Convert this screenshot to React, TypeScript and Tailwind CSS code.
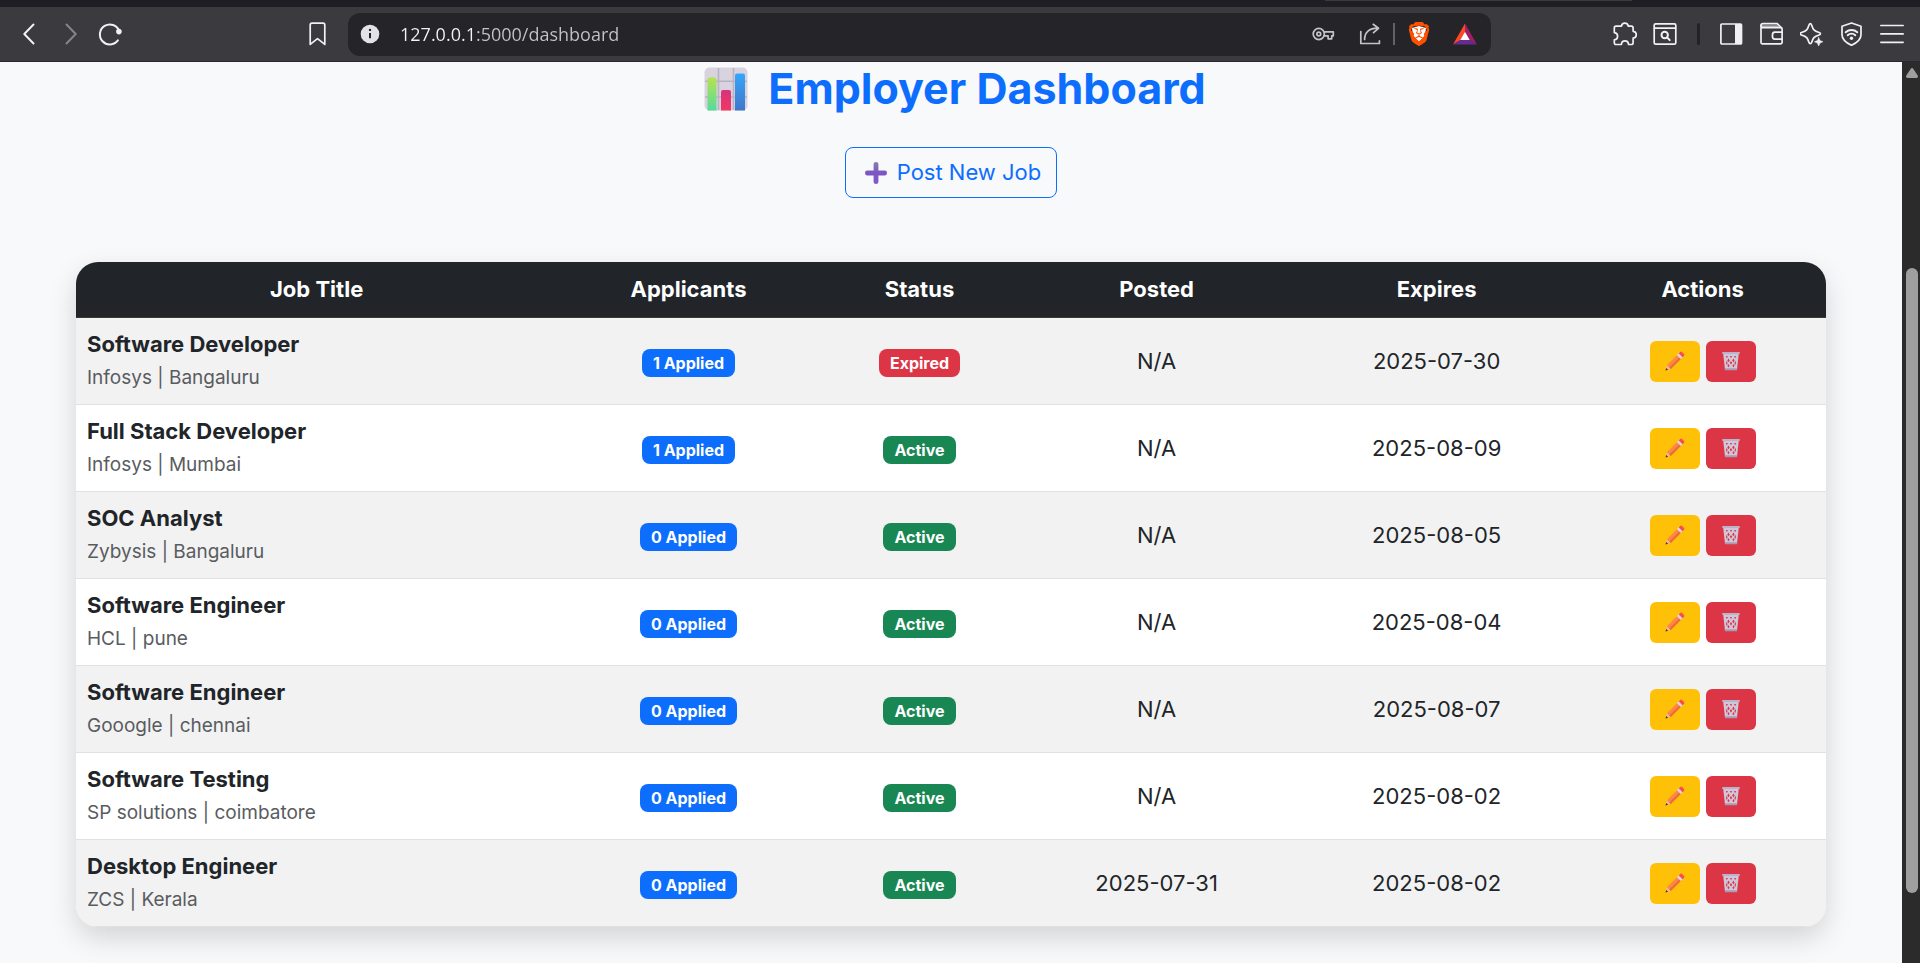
import type { ReactNode } from "react";
import { SiBrave } from "react-icons/si";

type Job = {
  title: string;
  company: string;
  place: string;
  applied: number;
  active: boolean;
  posted: string;
  expires: string;
};

const jobs: Job[] = [
  { title: "Software Developer", company: "Infosys", place: "Bangaluru", applied: 1, active: false, posted: "N/A", expires: "2025-07-30" },
  { title: "Full Stack Developer", company: "Infosys", place: "Mumbai", applied: 1, active: true, posted: "N/A", expires: "2025-08-09" },
  { title: "SOC Analyst", company: "Zybysis", place: "Bangaluru", applied: 0, active: true, posted: "N/A", expires: "2025-08-05" },
  { title: "Software Engineer", company: "HCL", place: "pune", applied: 0, active: true, posted: "N/A", expires: "2025-08-04" },
  { title: "Software Engineer", company: "Gooogle", place: "chennai", applied: 0, active: true, posted: "N/A", expires: "2025-08-07" },
  { title: "Software Testing", company: "SP solutions", place: "coimbatore", applied: 0, active: true, posted: "N/A", expires: "2025-08-02" },
  { title: "Desktop Engineer", company: "ZCS", place: "Kerala", applied: 0, active: true, posted: "2025-07-31", expires: "2025-08-02" },
];

function Tool({ label, className = "", children }: { label: string; className?: string; children: ReactNode }) {
  return (
    <button type="button" aria-label={label} className={`size-6 shrink-0 ${className}`}>
      <svg viewBox="0 0 24 24" className="size-6" fill="none" stroke="currentColor" strokeWidth="1.7" strokeLinecap="round" strokeLinejoin="round" aria-hidden="true">
        {children}
      </svg>
    </button>
  );
}

function AddressBar() {
  return (
    <div className="flex h-[43px] flex-1 items-center gap-[22px] rounded-xl bg-[#252429] pr-3.5 pl-2.5 text-[#c4c4c7]">
      <Tool label="Site information" className="text-[#e3e3e6]">
        <circle cx="12" cy="12" r="9.3" fill="currentColor" stroke="none" />
        <path d="M12 11v5.3" stroke="#252429" strokeWidth="2" strokeLinecap="butt" />
        <circle cx="12" cy="7.9" r="1.2" fill="#252429" stroke="none" />
      </Tool>
      <input
        aria-label="Address"
        defaultValue="127.0.0.1:5000/dashboard"
        className="-ml-1 h-8 min-w-0 flex-1 bg-[linear-gradient(90deg,#f4f4f5_75px,#c4c4c7_75px)] bg-clip-text font-['Open_Sans',sans-serif] text-[18px] text-transparent outline-none"
      />
      <Tool label="Passwords">
        <circle cx="7.8" cy="12" r="5.6" />
        <circle cx="7.8" cy="12" r="1.9" />
        <path d="M12.9 9.800h9.400v4h-1.600v3h-3.600v-3h-4.200" />
      </Tool>
      <Tool label="Share">
        <path d="M3.800 9.500v12h18.600v-2.600" />
        <path d="M7.600 17.500c0-7 4.800-11.300 12.800-11.300M16.200 2.300l5.300 4-5 4.300" />
      </Tool>
      <span className="-mx-2.5 h-[22px] w-0.5 bg-[#626166]" />
      <button type="button" aria-label="Brave Shields" className="grid size-6 place-items-center">
        <svg viewBox="0 0 24 24" className="col-start-1 row-start-1 size-6" aria-hidden="true">
          <path d="M5 6 12 4l7 2-1 8-6 6-6-6z" fill="#fff" />
        </svg>
        <SiBrave className="col-start-1 row-start-1 size-6 text-[#ff5000]" aria-hidden="true" />
      </button>
      <button type="button" aria-label="Brave Rewards" className="size-6">
        <svg viewBox="0 0 24 24" className="size-6" aria-hidden="true">
          <path d="M12 1.500 0 22.500l7.600-4.600L12 10z" fill="#ff4724" />
          <path d="m12 1.500 12 21-7.600-4.600L12 10z" fill="#9e1f63" />
          <path d="M0 22.500h24l-7.600-4.600H7.600z" fill="#662d91" />
          <path d="m12 9.700 4.700 8.400H7.300z" fill="#fff" />
        </svg>
      </button>
    </div>
  );
}

function BrowserBar() {
  return (
    <header className="font-['Open_Sans',sans-serif]">
      <div className="flex h-[7px] items-start bg-[#1f1e24]">
        <div className="ml-[69%] h-px w-[16%] bg-[#3b3a3f]" />
      </div>
      <nav aria-label="Browser" className="flex h-[55px] items-center border-b border-[#29282d] bg-[#3b3a3f] pr-4 pl-[18px] text-[#f1f1f3]">
        <div className="flex items-center gap-4">
          <Tool label="Back">
            <path d="M15.500 2.500 6.300 12l9.200 9.500" strokeWidth="2" />
          </Tool>
          <Tool label="Forward" className="text-[#858489]">
            <path d="M8.500 2.500 17.700 12l-9.200 9.500" strokeWidth="2" />
          </Tool>
          <Tool label="Reload">
            <path d="M19.900 18.400A10 10 0 1 1 21.200 8.800" strokeWidth="2" />
            <circle cx="20.900" cy="9.600" r="2.800" fill="currentColor" stroke="none" />
          </Tool>
        </div>
        <Tool label="Bookmark this page" className="mr-[18px] ml-[184px]">
          <path d="M4.200 22.400V3a1.800 1.800 0 0 1 1.800-1.800h11A1.800 1.800 0 0 1 18.800 3v19.400L11.500 16.700z" />
        </Tool>
        <AddressBar />
        <div className="ml-[122px] flex items-center gap-4">
          <Tool label="Extensions">
            <path d="M7.200 4.200h1.300c.5-4 6.200-4 6.700 0h3.200c1 0 1.700.7 1.700 1.700V9.300c4.300.4 4.300 6.400 0 6.800v4.700c0 1-.7 1.700-1.700 1.700h-2.900c-.3-4.800-6.800-4.800-7.100 0H3c-1 0-1.700-.7-1.700-1.700v-3c4.400-.4 4.400-6.800 0-7.200V5.900c0-1 .7-1.700 1.700-1.700z" />
          </Tool>
          <Tool label="Search this page">
            <rect x="1.200" y="1.800" width="21.600" height="20.400" rx="1.500" />
            <path d="M1.500 6.200h21" />
            <circle cx="11.700" cy="13" r="3.200" strokeWidth="2" />
            <path d="m14.200 15.500 2.500 2.600" strokeWidth="2" />
          </Tool>
          <span className="mx-1 h-[22px] w-[3px] rounded-full bg-[#232227]" />
          <Tool label="Sidebar">
            <rect x=".9" y="2" width="20.600" height="20" rx="1" />
            <path d="M15 2h6.800v20H15z" fill="currentColor" stroke="none" />
          </Tool>
          <Tool label="Wallet">
            <path d="M1 3.700c0-1.200.8-2 2-2h14.200l4 4" />
            <path d="M1.500 3.200h16.500l2.500 2.600H2z" fill="#a09fa4" stroke="none" />
            <path d="M1 3.700v16.800c0 .8.600 1.300 1.300 1.300h18.500c.8 0 1.300-.5 1.300-1.300V7c0-.8-.5-1.300-1.300-1.300H3c-1.200 0-2-.8-2-2z" />
            <path d="M22.100 10.200h-7.400c-1.200 0-2.300 1.600-2.300 3.500s1.100 3.500 2.300 3.500h7.400" />
          </Tool>
          <Tool label="Leo AI">
            <path d="M10.300 1.600c.7 0 1.100.8 1.400 1.600 1.500 4.600 2 5.600 7.400 7.300 1.800.6 1.800 1.900 0 2.500-5.400 1.700-5.900 3-7.400 7.300-.6 1.800-2.200 1.800-2.800 0C7.400 16 6.900 14.700 1.500 13c-1.800-.6-1.800-1.900 0-2.500 5.400-1.700 5.900-2.700 7.400-7.300.3-.8.700-1.600 1.400-1.600z" />
            <path d="m18.700 15.500 1.300 3 3 1.300-3 1.300-1.300 3-1.300-3-3-1.300 3-1.300z" fill="currentColor" strokeWidth=".5" />
          </Tool>
          <Tool label="VPN">
            <path d="M11.500 1 21 4.200v8.500c0 5-5.500 8.700-9.500 10.600C7.500 21.400 2 17.700 2 12.700V4.200z" />
            <path d="M5.700 10.300c3.300-3 8.300-3 11.600 0M7.700 13.300c2.200-2 5.400-2 7.600 0" strokeWidth="1.900" />
            <circle cx="11.500" cy="16.300" r="1.700" fill="currentColor" stroke="none" />
          </Tool>
          <Tool label="Menu">
            <path d="M.9 3.500h22.200M.9 11.900h22.200M.9 20.300h22.200" />
          </Tool>
        </div>
      </nav>
    </header>
  );
}

function ChartIcon() {
  return (
    <svg viewBox="0 0 44 44" className="size-11" aria-hidden="true">
      <defs>
        <linearGradient id="green" x1="0" y1="0" x2="0" y2="1"><stop stopColor="#b5e34f" /><stop offset="1" stopColor="#55db9b" /></linearGradient>
        <linearGradient id="pink" x1="0" y1="0" x2="0" y2="1"><stop stopColor="#d7337e" /><stop offset="1" stopColor="#f23764" /></linearGradient>
        <linearGradient id="blue" x1="0" y1="0" x2="0" y2="1"><stop stopColor="#36a6fa" /><stop offset="1" stopColor="#3f77cb" /></linearGradient>
      </defs>
      <rect x=".5" y=".5" width="43" height="43" rx="5" fill="#d9d3df" />
      <path d="M14.500 1v42M29.500 1v42M1 14.300h42M1 30h42" stroke="#b9b2c1" strokeWidth="1.600" />
      <path d="M3.500 43.500V12.500q0-2 2-2h5q2 0 2 2v31z" fill="url(#green)" />
      <path d="M17 43.500V25q0-2 2-2h6q2 0 2 2v18.500z" fill="url(#pink)" />
      <path d="M31 43.500V8.500q0-2 2-2h6q2 0 2 2v35z" fill="url(#blue)" />
    </svg>
  );
}

function PlusIcon() {
  return (
    <svg viewBox="0 0 22 22" className="size-[22px]" aria-hidden="true">
      <defs>
        <linearGradient id="plus" x1="0" y1="0" x2="0" y2="1"><stop stopColor="#8b7fa8" /><stop offset=".5" stopColor="#7c55c4" /><stop offset="1" stopColor="#8159cf" /></linearGradient>
      </defs>
      <path d="M8.600 2q0-2 2.400-2t2.400 2v6.600H20q2 0 2 2.400t-2 2.400h-6.600V20q0 2-2.400 2t-2.400-2v-6.600H2q-2 0-2-2.400t2-2.400h6.600z" fill="url(#plus)" />
    </svg>
  );
}

function PencilIcon() {
  return (
    <svg viewBox="0 0 20 20" className="size-5" aria-hidden="true">
      <path d="M.6 19.300 2 14.200 4.100 14l1.800 1.800-.2 2z" fill="#f0b894" />
      <path d="m.5 19.500.7-2.600 1.900 1.800z" fill="#4b2b3d" />
      <path d="M2 14.200 12.400 3.800l3.800 3.800L5.800 18z" fill="#ff8645" />
      <path d="m4.300 16.500 10.500-10.400 1.400 1.500L5.800 18z" fill="#e96c3b" />
      <path d="m11.900 4.300 2-2 3.900 3.800-2.100 2z" fill="#dcd5ec" />
      <path d="m13.800 2.400 1.400-1.400q.9-.8 1.800 0l2 2q.9.900 0 1.800l-1.400 1.400z" fill="#fa4c4e" />
    </svg>
  );
}

function TrashIcon() {
  return (
    <svg viewBox="0 0 20 20" className="size-5" aria-hidden="true">
      <path d="M2.200 2.500h15.600L16 18.500H4z" fill="#cfc7da" />
      <path d="M4.900 5h2l-1 2.200zM9 5h2l-1 2.200zM13.100 5h2l-1 2.200zM6.300 9.400l1.200-1.900 1.200 1.900-1.200 1.800zM11.200 9.400l1.200-1.900 1.200 1.900-1.200 1.800zM5 11.300l1-1.600.5 3.200-.9 1zM8.800 11.700l1.200-1.800 1.200 1.800-1.200 1.900zM15 11.300l-1-1.600-.5 3.200.9 1zM6.400 14.700l1.100-1.800 1.100 1.800-1.100 1.500zM11.400 14.700l1.100-1.800 1.100 1.800-1.100 1.500z" fill="#dc3545" />
      <path d="M1.300 1h17.400v2H1.300z" fill="#bdb3c9" />
      <path d="M3.700 17.200h12.600l-.3 2H4z" fill="#a99bb5" />
    </svg>
  );
}

function Badge({ tone, children }: { tone: "blue" | "red" | "green"; children: ReactNode }) {
  const tones = { blue: "bg-[#0d6efd]", red: "bg-[#dc3545]", green: "bg-[#198754]" };
  return (
    <span className={`mt-1 inline-block rounded-lg px-[11px] text-[16px] leading-7 font-bold text-white ${tones[tone]}`}>{children}</span>
  );
}

function JobRow({ job }: { job: Job }) {
  return (
    <tr className="border-b border-[#dee2e6] odd:bg-[#f2f2f2] even:bg-white">
      <td className="px-[11px] pt-2.5 pb-2 text-left">
        <strong className="block leading-8 font-bold">{job.title}</strong>
        <span className="block text-[19px] leading-9 text-[#595c5f]">
          {job.company} | {job.place}
        </span>
      </td>
      <td><Badge tone="blue">{job.applied} Applied</Badge></td>
      <td><Badge tone={job.active ? "green" : "red"}>{job.active ? "Active" : "Expired"}</Badge></td>
      <td>{job.posted}</td>
      <td>{job.expires}</td>
      <td>
        <div className="flex justify-center gap-1.5">
          <button type="button" aria-label={`Edit ${job.title}`} className="flex h-[41px] items-center rounded-md bg-[#ffc107] px-[15px]">
            <PencilIcon />
          </button>
          <button type="button" aria-label={`Delete ${job.title}`} className="flex h-[41px] items-center rounded-md bg-[#dc3545] px-[15px]">
            <TrashIcon />
          </button>
        </div>
      </td>
    </tr>
  );
}

function Scrollbar() {
  return (
    <div aria-hidden="true" className="flex w-[18px] shrink-0 flex-col items-center bg-[#2b2b2b] pt-1.5 pl-0.5">
      <svg viewBox="0 0 12 10" className="h-2.5 w-3">
        <path d="M6 0q.8 0 1.400.9l4.300 6.600q.7 2-1 2.500H1.300q-1.700-.5-1-2.500L4.600.9Q5.200 0 6 0z" fill="#9f9f9f" />
      </svg>
      <div className="mt-[190px] h-[625px] w-3 rounded-full bg-[#9f9f9f]" />
    </div>
  );
}

export default function App() {
  return (
    <div className="flex min-h-screen flex-col bg-[#f8f9fb] font-[Inter,sans-serif] text-[22px] text-[#212529]">
      <BrowserBar />
      <div className="flex flex-1">
        <main className="flex-1 px-[76px] pb-[35px]">
          <h1 className="flex items-center justify-center gap-5 pl-2 text-[43px] leading-[53px] font-bold text-[#0d6efd]">
            <ChartIcon />
            Employer Dashboard
          </h1>
          <div className="mt-8 flex justify-center">
            <a href="#post" className="flex items-center gap-2.5 rounded-lg border border-[#0d6efd] py-2 pr-[15px] pl-[19px] leading-[33px] text-[#0d6efd]">
              <PlusIcon />
              Post New Job
            </a>
          </div>
          <div className="mt-16 overflow-hidden rounded-[22px] shadow-[0_11px_28px_rgba(0,0,0,0.15)]">
            <table className="w-full table-fixed border-collapse text-center">
              <colgroup>
                <col className="w-[27.5%]" />
                <col className="w-[15%]" />
                <col className="w-[11.4%]" />
                <col className="w-[15.7%]" />
                <col className="w-[16.3%]" />
                <col className="w-[14.1%]" />
              </colgroup>
              <thead className="bg-[#212529] text-white">
                <tr className="border-b border-[#373b3e]">
                  {["Job Title", "Applicants", "Status", "Posted", "Expires", "Actions"].map((name) => (
                    <th key={name} scope="col" className="py-[11px] leading-[33px] font-bold">{name}</th>
                  ))}
                </tr>
              </thead>
              <tbody>
                {jobs.map((job, index) => (
                  <JobRow key={index} job={job} />
                ))}
              </tbody>
            </table>
          </div>
        </main>
        <Scrollbar />
      </div>
    </div>
  );
}
